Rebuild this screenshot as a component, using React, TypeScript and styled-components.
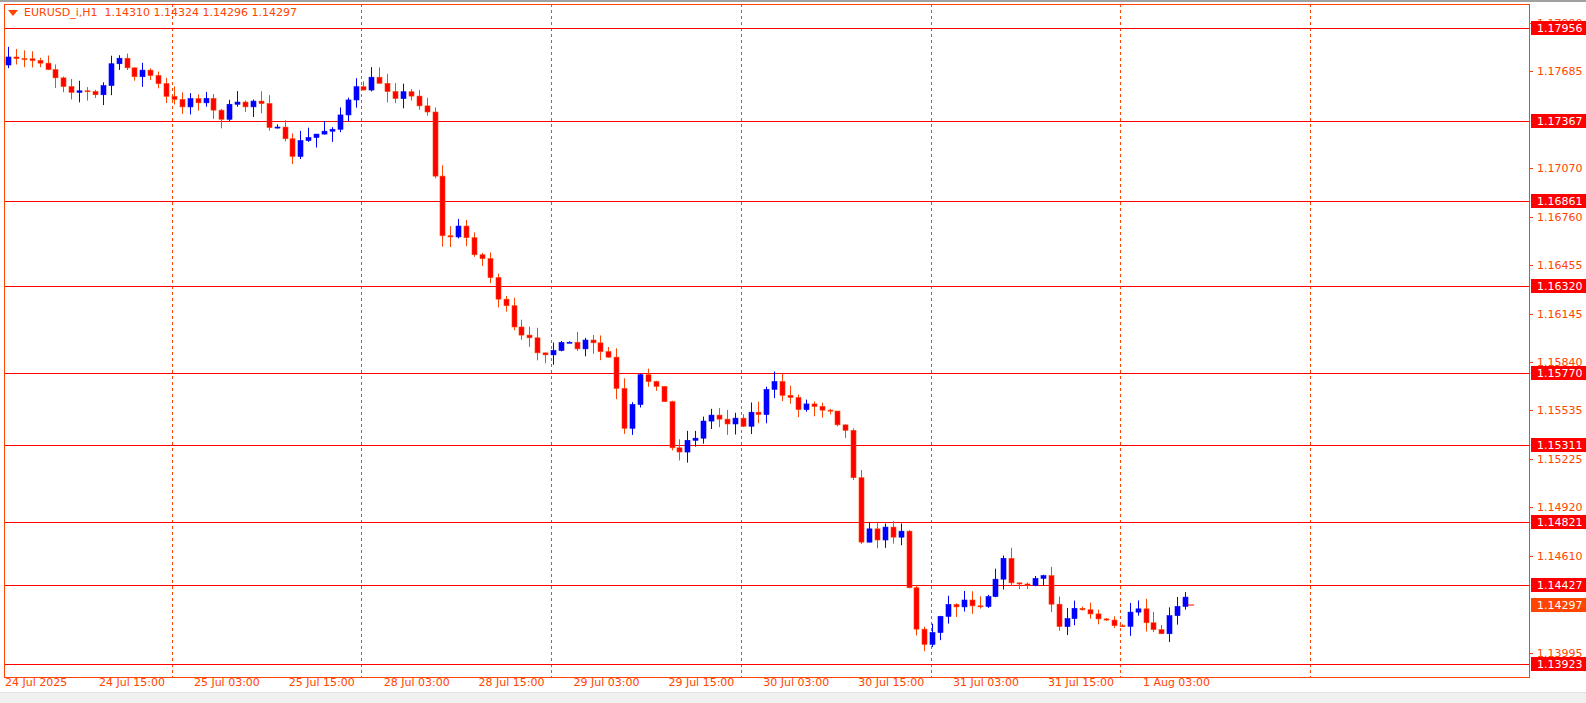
import React from "react"
import styled, { createGlobalStyle } from "styled-components"

const Global = createGlobalStyle`
  html, body { margin: 0; padding: 0; background: #f0f0f0; }
  body { font-family: "DejaVu Sans", "Liberation Sans", sans-serif; }
`

const Page = styled.div`
  width: 1586px;
  height: 703px;
  background: #ffffff;
  border-top: 2px solid #a0a0a0;
  box-sizing: border-box;
  position: relative;
  overflow: hidden;
`

const Footer = styled.div`
  position: absolute;
  left: 0;
  right: 0;
  bottom: 0;
  height: 10px;
  background: #f0f0f0;
  border-top: 1px solid #e2e2e2;
`

const Title = styled.div`
  position: absolute;
  left: 8px;
  top: 4px;
  display: flex;
  align-items: center;
  gap: 6px;
  font-size: 11px;
  color: #ff4500;
  white-space: pre;
`

const Arrow = styled.span`
  width: 0;
  height: 0;
  border-left: 5px solid transparent;
  border-right: 5px solid transparent;
  border-top: 6px solid #ff4500;
`

const FRAME = { l: 4, r: 1529, t: 2, b: 675 }
const ORANGE = "#ff4500"
const RED = "#ff0000"
const yOf = (p: number) => 26 + (1.17956 - p) * 15770

const levels = [1.17956, 1.17367, 1.16861, 1.1632, 1.1577, 1.15311, 1.14821, 1.14427, 1.13923]
const ticks = ["1.17990", "1.17685", "1.17070", "1.16760", "1.16455", "1.16145", "1.15840", "1.15535", "1.15225", "1.14920", "1.14610", "1.13995"]
const times = ["24 Jul 2025", "24 Jul 15:00", "25 Jul 03:00", "25 Jul 15:00", "28 Jul 03:00", "28 Jul 15:00", "29 Jul 03:00", "29 Jul 15:00", "30 Jul 03:00", "30 Jul 15:00", "31 Jul 03:00", "31 Jul 15:00", "1 Aug 03:00"]
const grids = [172, 361, 551, 741, 931, 1120, 1310]

// path of the close, as pixel y at pixel x
const keys: [number, number][] = [
  [8, 63], [40, 56], [60, 78], [100, 98], [108, 60], [150, 73], [170, 103], [200, 93], [215, 113], [240, 106],
  [260, 93], [270, 123], [290, 153], [300, 143], [330, 123], [345, 106], [360, 86], [380, 78], [400, 93], [420, 98],
  [430, 113], [440, 238], [460, 228], [480, 253], [500, 298], [515, 333], [530, 343], [560, 348], [590, 343], [610, 358],
  [625, 436], [640, 378], [660, 376], [670, 448], [690, 438], [710, 413], [740, 418], [760, 408], [770, 383], [800, 403],
  [830, 403], [850, 438], [860, 533], [880, 533], [905, 523], [910, 608], [925, 648], [940, 608], [960, 598], [985, 598],
  [1000, 558], [1020, 588], [1040, 573], [1060, 628], [1075, 598], [1090, 608], [1110, 628], [1140, 613], [1155, 638],
  [1170, 618], [1185, 598], [1192, 600],
]

const interp = (x: number) => {
  for (let i = 1; i < keys.length; i++) {
    if (x <= keys[i][0]) {
      const [x0, y0] = keys[i - 1]
      const [x1, y1] = keys[i]
      return y0 + ((x - x0) / (x1 - x0)) * (y1 - y0)
    }
  }
  return keys[keys.length - 1][1]
}

let seed = 7
const rnd = () => {
  seed = (seed * 16807) % 2147483647
  return seed / 2147483647
}

interface Candle { x: number; o: number; c: number; h: number; l: number }

const candles: Candle[] = []
let prev = 63
for (let x = 8; x <= 1192; x += 7.9) {
  const c = interp(x) + (rnd() - 0.5) * 16
  const o = prev
  const h = Math.min(o, c) - rnd() * 11
  const l = Math.max(o, c) + rnd() * 11
  candles.push({ x: Math.round(x), o, c, h, l })
  prev = c
}

const CandleShape = ({ d }: { d: Candle }) => {
  const bull = d.c < d.o
  const top = Math.min(d.o, d.c)
  const hgt = Math.max(1, Math.abs(d.o - d.c))
  return (
    <g>
      <line x1={d.x + 0.5} x2={d.x + 0.5} y1={d.h} y2={d.l} stroke={bull ? "#0000ff" : ORANGE} />
      <rect x={d.x - 2} y={top} width={5} height={hgt} fill={bull ? "#0000ff" : RED} stroke={bull ? "#0000ff" : ORANGE} strokeWidth={0.6} />
    </g>
  )
}

const Chart = () => (
  <svg width={1586} height={690} style={{ display: "block" }} fontFamily="DejaVu Sans, sans-serif" fontSize={11}>
    {grids.map((g) => (
      <line key={g} x1={g + 0.5} x2={g + 0.5} y1={FRAME.t} y2={FRAME.b} stroke={ORANGE} strokeDasharray="3,3" />
    ))}
    {levels.map((p) => (
      <line key={p} x1={FRAME.l} x2={FRAME.r} y1={Math.round(yOf(p)) + 0.5} y2={Math.round(yOf(p)) + 0.5} stroke={RED} />
    ))}
    {candles.map((d, i) => (
      <CandleShape key={i} d={d} />
    ))}
    <rect x={FRAME.l + 0.5} y={FRAME.t + 0.5} width={FRAME.r - FRAME.l} height={FRAME.b - FRAME.t} fill="none" stroke={ORANGE} />
    {ticks.map((t) => {
      const y = Math.round(yOf(parseFloat(t)))
      return (
        <g key={t}>
          <line x1={FRAME.r} x2={FRAME.r + 4} y1={y + 0.5} y2={y + 0.5} stroke={ORANGE} />
          <text x={1537} y={y + 4} fill={ORANGE}>{t}</text>
        </g>
      )
    })}
    {levels.map((p) => {
      const y = Math.round(yOf(p))
      return (
        <g key={"b" + p}>
          <rect x={1531} y={y - 7} width={55} height={14} fill={RED} />
          <text x={1537} y={y + 4} fill="#fff">{p.toFixed(5)}</text>
        </g>
      )
    })}
    <rect x={1531} y={yOf(1.14297) - 7} width={55} height={14} fill={ORANGE} />
    <text x={1537} y={yOf(1.14297) + 4} fill="#fff">1.14297</text>
    <line x1={1188} x2={1194} y1={yOf(1.14297)} y2={yOf(1.14297)} stroke={RED} />
    {times.map((t, i) => {
      const x = i === 0 ? 5 : 99 + (i - 1) * 94.9
      return (
        <text key={t} x={x} y={684} fill={ORANGE}>{t}</text>
      )
    })}
  </svg>
)

export default function App() {
  return (
    <Page>
      <Global />
      <Chart />
      <Title>
        <Arrow />
        {"EURUSD_i,H1  1.14310 1.14324 1.14296 1.14297"}
      </Title>
      <Footer />
    </Page>
  )
}
